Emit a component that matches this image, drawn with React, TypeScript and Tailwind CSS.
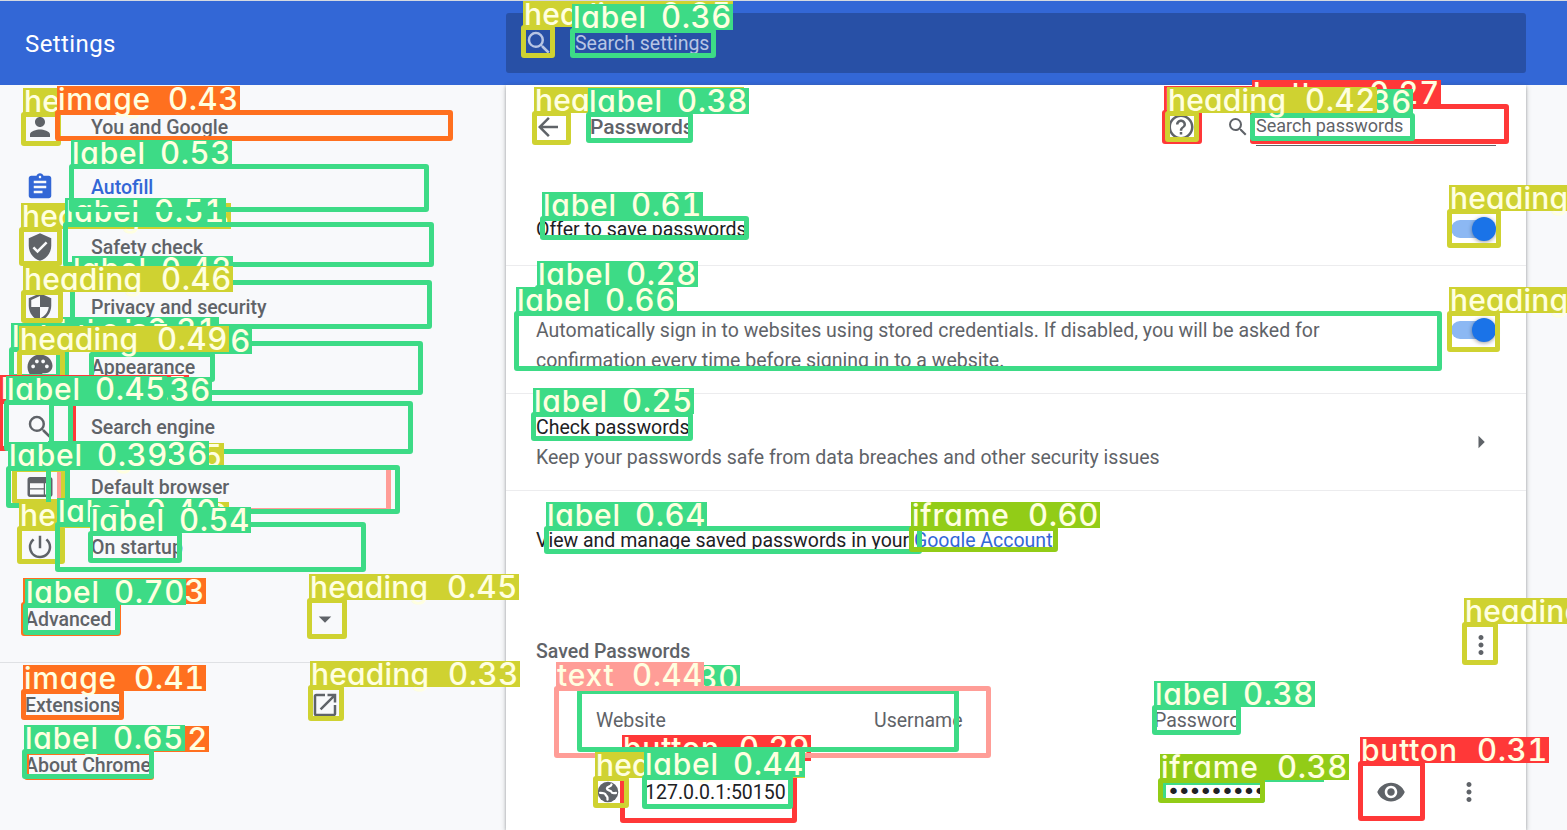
import type { ReactNode } from "react";
import {
  MdArrowBack, MdArrowDropDown, MdArrowRight, MdAssignment, MdHelpOutline, MdMoreVert, MdOpenInNew,
  MdPalette, MdPerson, MdPowerSettingsNew, MdSearch, MdSecurity, MdVerifiedUser, MdVisibility, MdWeb,
} from "react-icons/md";

type Kind = "heading" | "label" | "image" | "button" | "text" | "iframe";

const kinds: Record<Kind, { border: string; fill: string; tag: string; word: string }> = {
  heading: { border: "border-[#cfd231]", fill: "bg-[#cfd231]", tag: "w-[210px]", word: "w-[138px] tracking-[0.2px]" },
  label: { border: "border-[#3ddb86]", fill: "bg-[#3ddb86]", tag: "w-[161px]", word: "w-[89px] tracking-[0.8px]" },
  image: { border: "border-[#ff701f]", fill: "bg-[#ff701f]", tag: "w-[183px]", word: "w-[111px] tracking-[0.8px]" },
  button: { border: "border-[#ff3838]", fill: "bg-[#ff3838]", tag: "w-[189px]", word: "w-[117px] tracking-[0.8px]" },
  text: { border: "border-[#ff9d97]", fill: "bg-[#ff9d97]", tag: "w-[148px]", word: "w-[76px] tracking-[0.8px]" },
  iframe: { border: "border-[#92cc17]", fill: "bg-[#92cc17]", tag: "w-[189px]", word: "w-[117px] tracking-[0.8px]" },
};

// Detections: kind, score, then the centre line of the box (left, top, right, bottom).
// Painted in order, so later entries cover earlier ones.
const detections: [Kind, string, number, number, number, number][] = [
  ["heading", "0.35", 524, 27, 553, 55],
  ["label", "0.36", 573, 30, 714, 55],
  ["heading", "0.38", 24, 114, 59, 143],
  ["image", "0.43", 58, 112, 451, 138],
  ["heading", "0.48", 22, 229, 60, 263],
  ["label", "0.51", 66, 224, 432, 264],
  ["label", "0.53", 72, 166, 427, 209],
  ["label", "0.42", 73, 282, 430, 326],
  ["label", "0.31", 59, 343, 421, 392],
  ["label", "0.35", 12, 349, 67, 376],
  ["label", "0.36", 92, 354, 213, 379],
  ["heading", "0.46", 24, 292, 61, 320],
  ["heading", "0.49", 20, 352, 63, 382],
  ["button", "0.25", 1, 401, 74, 448],
  ["label", "0.36", 52, 403, 411, 451],
  ["label", "0.45", 7, 402, 71, 448],
  ["text", "0.25", 60, 467, 389, 510],
  ["heading", "0.35", 15, 469, 64, 501],
  ["label", "0.36", 49, 467, 398, 511],
  ["label", "0.39", 9, 468, 68, 505],
  ["heading", "0.38", 20, 528, 63, 561],
  ["label", "0.40", 58, 524, 364, 569],
  ["label", "0.54", 91, 533, 180, 560],
  ["image", "0.33", 24, 604, 119, 633],
  ["label", "0.70", 26, 605, 118, 632],
  ["heading", "0.45", 310, 600, 345, 636],
  ["heading", "0.33", 311, 687, 342, 718],
  ["image", "0.41", 24, 691, 122, 717],
  ["image", "0.32", 27, 752, 152, 777],
  ["label", "0.65", 25, 751, 152, 776],
  ["heading", "0.35", 535, 113, 569, 142],
  ["label", "0.38", 589, 114, 691, 140],
  ["label", "0.61", 543, 218, 747, 237],
  ["label", "0.28", 538, 287, 642, 313],
  ["label", "0.66", 517, 313, 1440, 368],
  ["label", "0.25", 534, 414, 691, 438],
  ["label", "0.64", 547, 528, 920, 551],
  ["iframe", "0.60", 912, 528, 1056, 549],
  ["button", "0.25", 1165, 112, 1200, 141],
  ["button", "0.27", 1253, 106, 1507, 141],
  ["label", "0.36", 1253, 115, 1413, 138],
  ["heading", "0.42", 1168, 113, 1197, 139],
  ["heading", "0.50", 1450, 211, 1499, 245],
  ["heading", "0.50", 1450, 313, 1498, 349],
  ["heading", "0.50", 1465, 624, 1496, 662],
  ["button", "0.29", 623, 761, 795, 820],
  ["label", "0.30", 580, 691, 957, 749],
  ["text", "0.44", 557, 688, 989, 755],
  ["heading", "0.40", 596, 778, 627, 805],
  ["label", "0.44", 645, 777, 791, 806],
  ["label", "0.38", 1155, 707, 1239, 732],
  ["label", "0.31", 1164, 782, 1263, 800],
  ["iframe", "0.38", 1161, 780, 1263, 800],
  ["button", "0.31", 1361, 763, 1423, 818],
];

function Detection({ item }: { item: (typeof detections)[number] }) {
  const [kind, score, x1, y1, x2, y2] = item;
  const k = kinds[kind];
  return (
    <>
      <div
        className={`absolute rounded-[3px] border-[5px] ${k.border}`}
        style={{ left: x1 - 3, top: y1 - 2, width: x2 - x1 + 5, height: y2 - y1 + 5 }}
      />
      <div
        className={`absolute h-[26px] whitespace-nowrap font-[Inter,sans-serif] text-[30px] leading-[26px] font-medium text-[#ffffe0] [font-feature-settings:'cv11','tnum'] ${k.fill} ${k.tag}`}
        style={{ left: x1 - 1, top: y1 - 26 }}
      >
        <span className={`inline-block pl-px ${k.word}`}>{kind} </span>
        <span className="inline-block text-[31px] tracking-[0.6px]">{score}</span>
      </div>
    </>
  );
}

const navItems: { icon: ReactNode; text: string; active?: boolean }[] = [
  { icon: <MdPerson />, text: "You and Google" },
  { icon: <MdAssignment />, text: "Autofill", active: true },
  { icon: <MdVerifiedUser />, text: "Safety check" },
  { icon: <MdSecurity />, text: "Privacy and security" },
  { icon: <MdPalette />, text: "Appearance" },
  { icon: <MdSearch />, text: "Search engine" },
  { icon: <MdWeb />, text: "Default browser" },
  { icon: <MdPowerSettingsNew />, text: "On startup" },
];

function Toggle() {
  return (
    <div className="mr-[6px] flex h-[18px] w-[39px] shrink-0 items-center justify-end rounded-full bg-[#8cb8f3]">
      <div className="-mr-[6px] size-6 rounded-full bg-[#1a73e8] shadow-[0_1px_4px_rgba(0,0,0,0.4)]" />
    </div>
  );
}

function GlobeIcon() {
  return (
    <svg width="24" height="24" viewBox="0 0 24 24" fill="none">
      <circle cx="12" cy="12" r="10.3" fill="#5f6368" />
      <path
        d="M15.500 4.500c-.6 2.600-4.600 1.600-4.600 4s3.900 1.200 4.600 3.500c.5 1.800 2.500 1 4.500 1M4 12.800c3 0 5-.1 5.600 1.800.5 1.700 2.600 1.500 1.900 4.900"
        stroke="#fff"
        strokeWidth="2.300"
        strokeLinecap="round"
      />
    </svg>
  );
}

function Sidebar() {
  return (
    <nav className="w-[506px] shrink-0 pt-3 font-medium">
      {navItems.map((n) => (
        <div key={n.text} className={`flex h-[60px] items-center gap-9 pl-[25px] ${n.active ? "text-[#3367d6]" : ""}`}>
          <span className="text-[30px]">{n.icon}</span>
          <span className="pt-[2px]">{n.text}</span>
        </div>
      ))}
      <div className="mt-3 flex h-[60px] w-[340px] items-center justify-between pl-[25px]">
        <span className="pt-[2px]">Advanced</span>
        <MdArrowDropDown size={30} />
      </div>
      <div className="mt-[13px] mb-3 border-t border-[#dfe1e4]" />
      <div className="flex h-[60px] w-[340px] items-center justify-between pl-[25px]">
        <span className="pt-[2px]">Extensions</span>
        <MdOpenInNew size={30} />
      </div>
      <div className="flex h-[60px] items-center pt-[2px] pl-[25px]">About Chrome</div>
    </nav>
  );
}

export default function App() {
  return (
    <div className="relative flex h-[830px] w-[1567px] flex-col overflow-hidden bg-[#f8f9fb] font-[Roboto,sans-serif] text-[19.5px] leading-[30px] text-[#5f6368]">
      <header className="flex h-[85px] shrink-0 items-center border-t border-[#d5d9e0] bg-[#3367d6]">
        <h1 className="w-[506px] pt-px pl-[25px] text-[24px] tracking-[0.4px] font-normal text-white">Settings</h1>
        <div className="mb-px flex h-[60px] w-[1020px] items-center rounded-[3px] bg-[#2850a6] pl-[18px] text-[#b7c5e4]">
          <MdSearch size={30} />
          <span className="mt-[3px] ml-[21px]">Search settings</span>
        </div>
      </header>
      <div className="flex min-h-0 flex-1">
        <Sidebar />
        <main className="w-[1020px] shrink-0 bg-white shadow-[0_1px_3px_rgba(60,64,67,0.4),0_2px_6px_rgba(60,64,67,0.2)]">
          <div className="flex h-[84px] items-center pr-[30px] pl-[27px]">
            <MdArrowBack size={30} />
            <h2 className="ml-[27px] flex-1 text-[21px] font-medium">Passwords</h2>
            <MdHelpOutline size={30} />
            <MdSearch size={24} className="ml-[30px]" />
            <div className="-mt-px ml-[6px] h-[38px] w-[240px] border-b border-[#5f6368] pt-[3px] text-[18px]">Search passwords</div>
          </div>
          <div className="flex h-[97px] items-center justify-between border-b border-[#ececee] px-[30px] pt-[24px]">
            <span className="pt-[2px] text-[#202124]">Offer to save passwords</span>
            <Toggle />
          </div>
          <div className="flex h-[128px] items-center justify-between border-b border-[#ececee] px-[30px]">
            <div className="w-[840px] pt-[2px]">
              <div className="text-[#202124]">Auto Sign-in</div>
              <div>Automatically sign in to websites using stored credentials. If disabled, you will be asked for confirmation every time before signing in to a website.</div>
            </div>
            <Toggle />
          </div>
          <div className="flex h-[97px] items-center justify-between border-b border-[#ececee] px-[30px]">
            <div className="pt-[2px]">
              <div className="text-[#202124]">Check passwords</div>
              <div>Keep your passwords safe from data breaches and other security issues</div>
            </div>
            <MdArrowRight size={30} />
          </div>
          <div className="px-[30px] pt-[35px] text-[#202124]">
            View and manage saved passwords in your <a className="text-[#3367d6]">Google Account</a>
          </div>
          <div className="flex items-start justify-between px-[30px] pt-[74px]">
            <h3 className="pt-[7px] font-medium">Saved Passwords</h3>
            <MdMoreVert size={30} />
          </div>
          <div className="grid grid-cols-[278px_280px_1fr] pt-[39px] pl-[90px]">
            <span>Website</span>
            <span>Username</span>
            <span>Password</span>
          </div>
          <div className="flex h-[72px] items-center pt-[40px] pl-[90px] text-[#202124]">
            <GlobeIcon />
            <span className="mt-[2px] ml-[25px] w-[522px]">127.0.0.1:50150</span>
            <span className="w-[109px] font-['DejaVu_Sans',sans-serif] text-[22px] tracking-[-2.2px] whitespace-nowrap">•••••••••</span>
            <MdVisibility size={30} className="ml-[100px] text-[#5f6368]" />
            <MdMoreVert size={30} className="ml-[48px] text-[#5f6368]" />
          </div>
        </main>
      </div>
      {detections.map((d, i) => (
        <Detection key={i} item={d} />
      ))}
    </div>
  );
}
